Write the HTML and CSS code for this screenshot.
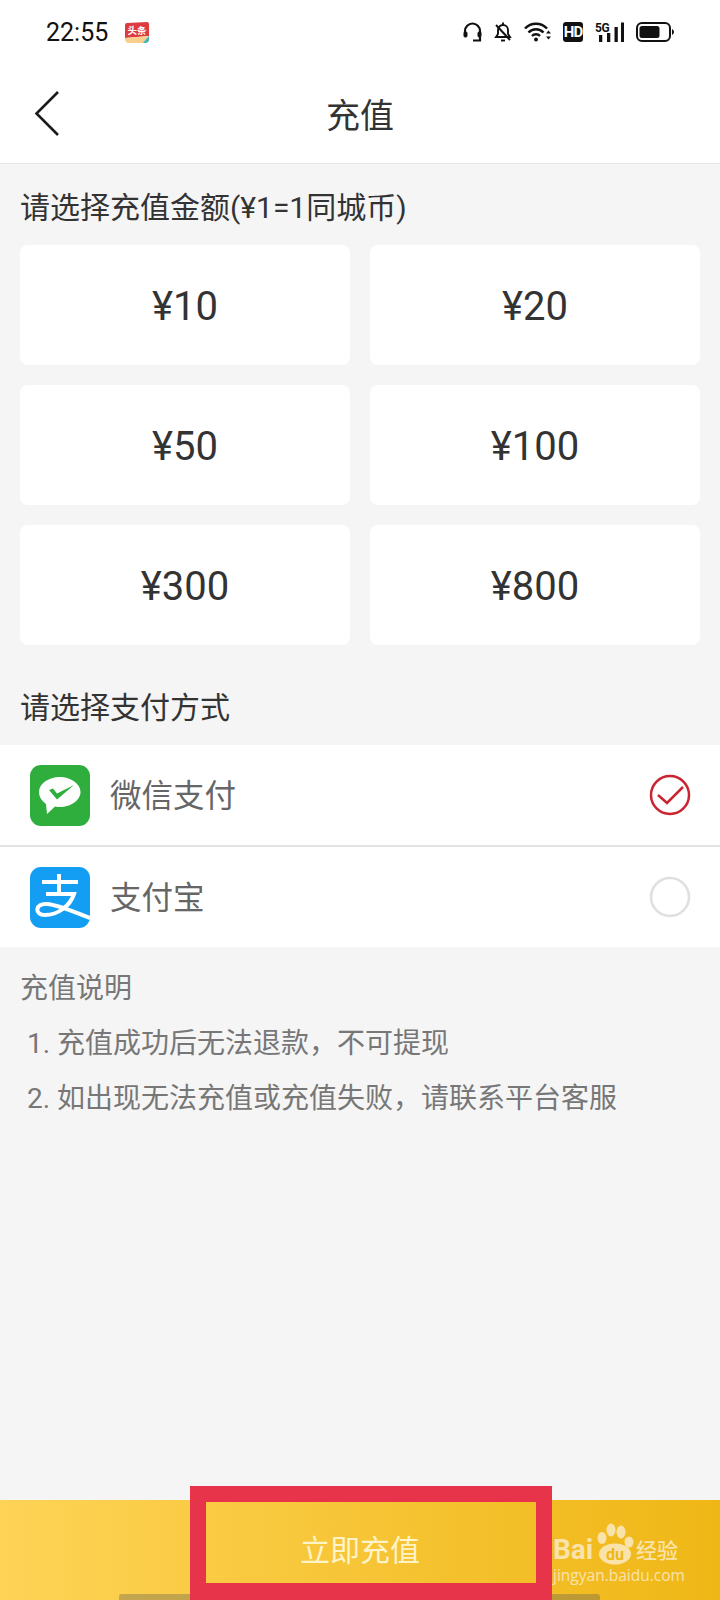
FILE: index.html
```html
<!DOCTYPE html>
<html lang="zh-CN">
<head>
    <meta charset="UTF-8">
    <meta name="viewport" content="width=device-width, initial-scale=1.0">
    <title>充值</title>
    <link rel="stylesheet" href="styles.css">
</head>
<body>
    <div class="page">
        <div class="statusBar">
            <div class="statusLeft">
                <span class="clock">22:55</span>
                <svg class="appIcon" width="24" height="21" viewBox="0 0 24 21">
                    <path d="M0 3 Q0 1 2 1 L22 0 Q24 0 24 2 L24 14 L0 16 Z" fill="#dd3b40"/>
                    <path d="M0 16 L24 14 L24 17 Q24 21 20 21 L4 21 Q0 21 0 17 Z" fill="#f8cf8c"/>
                    <path d="M18 21 L24 14 L24 17 Q24 21 20 21 Z" fill="#3cb4c8"/>
                    <text x="12" y="12" class="appIconText">头条</text>
                </svg>
            </div>
            <div class="statusRight">
                <!-- headset -->
                <svg width="19" height="20" viewBox="0 0 19 20" fill="none" stroke="#111" stroke-width="2.200">
                    <path d="M2 12 V9 A7.500 7.500 0 0 1 17 9 V12"/>
                    <rect x="1" y="10" width="3" height="5" rx="1" fill="#111" stroke-width="1"/>
                    <rect x="15" y="10" width="3" height="5" rx="1" fill="#111" stroke-width="1"/>
                    <path d="M17 15 V18.500 H10"/>
                </svg>
                <!-- muted bell -->
                <svg width="18" height="20" viewBox="0 0 18 20" fill="none" stroke="#111" stroke-width="1.900">
                    <path d="M2 15 L4 12 V8 A5 5 0 0 1 14 8 V12 L16 15 Z"/>
                    <path d="M7 18.500 H11"/>
                    <path d="M9 0.500 V3"/>
                    <path d="M2 3 L16 18"/>
                </svg>
                <!-- wifi -->
                <svg width="27" height="20" viewBox="0 0 27 20" fill="none" stroke="#111" stroke-width="2.500">
                    <path d="M1 6.500 A15 15 0 0 1 23 6.500"/>
                    <path d="M4.500 10.500 A10.500 10.500 0 0 1 19.500 10.500"/>
                    <path d="M8 14 A5.500 5.500 0 0 1 16 14"/>
                    <circle cx="12" cy="17.500" r="2" fill="#111" stroke="none"/>
                    <path d="M22 11.500 L24.500 8.500 L27 11.500 Z M22 14.500 L24.500 17.500 L27 14.500 Z" fill="#111" stroke="none"/>
                </svg>
                <div class="hdBadge">HD</div>
                <!-- 5G signal -->
                <div class="signal">
                    <span class="fiveG">5G</span>
                    <svg width="29" height="20" viewBox="0 0 29 20" fill="#111">
                        <rect x="4" y="13" width="3.300" height="7"/>
                        <rect x="12" y="11" width="3.300" height="9"/>
                        <rect x="19.500" y="5" width="3.300" height="15"/>
                        <rect x="26" y="0.500" width="3" height="19.500"/>
                    </svg>
                </div>
                <!-- battery -->
                <svg width="38" height="20" viewBox="0 0 38 20">
                    <rect x="1" y="1" width="33" height="18" rx="5" fill="none" stroke="#111" stroke-width="2"/>
                    <rect x="3.500" y="4" width="20" height="12" rx="2.500" fill="#111"/>
                    <path d="M36 7 Q38 8 38 10 Q38 12 36 13 Z" fill="#111"/>
                </svg>
            </div>
        </div>

        <div class="navBar">
            <svg class="backIcon" width="26" height="46" viewBox="0 0 26 46" fill="none" stroke="#1c1c1c" stroke-width="2.600">
                <path d="M24 1 L2.500 22.500 L24 44"/>
            </svg>
            <div class="navTitle">充值</div>
        </div>

        <div class="content">
            <div class="sectionTitle">请选择充值金额(¥1=1同城币)</div>
            <div class="amountGrid">
                <div class="amountCard">¥10</div>
                <div class="amountCard">¥20</div>
                <div class="amountCard">¥50</div>
                <div class="amountCard">¥100</div>
                <div class="amountCard">¥300</div>
                <div class="amountCard">¥800</div>
            </div>

            <div class="sectionTitle payTitle">请选择支付方式</div>
            <div class="payList">
                <div class="payRow">
                    <svg class="payIcon" width="60" height="61" viewBox="0 0 60 61">
                        <rect width="60" height="61" rx="11" fill="#2fae3e"/>
                        <path d="M30 12 C18 12 9 19 9 27 C9 32 12 36 16 39 L17 49 L25 41.500 C27 42 28.500 42 30 42 C41 42 50.500 35 50.500 27 C50.500 19 41 12 30 12 Z" fill="#fff"/>
                        <path d="M19 25 L23 23.500 L27 28.500 L44 20 L27 34.500 Z" fill="#2fae3e"/>
                    </svg>
                    <span class="payName">微信支付</span>
                    <svg class="radio" width="42" height="42" viewBox="0 0 42 42" fill="none" stroke="#ca2430" stroke-width="2.500">
                        <circle cx="21" cy="21" r="19"/>
                        <path d="M9 21 L18 29 L34 13"/>
                    </svg>
                </div>
                <div class="payRow">
                    <svg class="payIcon" width="60" height="61" viewBox="0 0 60 61">
                        <rect width="60" height="61" rx="11" fill="#139ef3"/>
                        <g fill="none" stroke="#fff" stroke-width="4">
                            <path d="M12 15 H48"/>
                            <path d="M29 7 V27"/>
                            <path d="M16 27 H44 C40 39 28 48 15 48 C4 48 5 36 17 37 C30 38 46 46 60 51"/>
                        </g>
                    </svg>
                    <span class="payName">支付宝</span>
                    <svg class="radio" width="42" height="42" viewBox="0 0 42 42" fill="none" stroke="#e0e0e0" stroke-width="2.600">
                        <circle cx="21" cy="21" r="19"/>
                    </svg>
                </div>
            </div>

            <div class="notes">
                <div class="notesHead">充值说明</div>
                <div class="noteLine">1. 充值成功后无法退款，不可提现</div>
                <div class="noteLine">2. 如出现无法充值或充值失败，请联系平台客服</div>
            </div>
        </div>

        <div class="submitBar">立即充值</div>

        <!-- overlays on the screenshot -->
        <div class="homeBar"></div>
        <div class="redBox"></div>
        <div class="watermark">
            <div class="wmTop">
                <span class="wmBai">Bai</span>
                <svg class="wmPaw" width="38" height="42" viewBox="0 0 38 42" fill="#f9e3ab">
                    <ellipse cx="5" cy="15" rx="4.500" ry="6"/>
                    <ellipse cx="14" cy="7" rx="4.500" ry="6.500"/>
                    <ellipse cx="24" cy="9" rx="4.500" ry="6.500"/>
                    <ellipse cx="32" cy="19" rx="4.500" ry="5.500"/>
                    <ellipse cx="18" cy="31" rx="16" ry="10.500"/>
                    <text x="18" y="37" class="wmDu">du</text>
                </svg>
                <span class="wmCn">经验</span>
            </div>
            <div class="wmUrl">jingyan.baidu.com</div>
        </div>
    </div>
</body>
</html>
```

FILE: styles.css
```css
* {
    box-sizing: border-box;
}

body {
    margin: 0;
    font-family: "Roboto", "Noto Sans CJK SC", sans-serif;
}

.page {
    position: relative;
    width: 720px;
    height: 1600px;
    overflow: hidden;
    display: flex;
    flex-direction: column;
    background-color: #f5f5f5;
}

.statusBar {
    height: 64px;
    flex: none;
    padding: 0 46px;
    display: flex;
    justify-content: space-between;
    align-items: center;
    background-color: #fff;
}

.statusLeft {
    display: flex;
    align-items: center;
    gap: 17px;
}

.clock {
    font-size: 25px;
    color: #111;
}

.appIconText {
    font-size: 9.500px;
    font-weight: 700;
    fill: #fff;
    text-anchor: middle;
}

.statusRight {
    display: flex;
    align-items: center;
    gap: 12px;
}

.hdBadge {
    width: 20px;
    height: 20px;
    border-radius: 3px;
    background-color: #111;
    color: #fff;
    font-size: 15px;
    font-weight: 700;
    letter-spacing: -1px;
    line-height: 20px;
    text-align: center;
}

.signal {
    position: relative;
    width: 29px;
    height: 20px;
}

.fiveG {
    position: absolute;
    left: 0;
    top: 0;
    font-size: 12px;
    line-height: 12px;
    font-weight: 700;
    letter-spacing: -0.5px;
    color: #111;
}

.navBar {
    height: 100px;
    flex: none;
    padding-left: 34px;
    display: flex;
    align-items: center;
    background-color: #fff;
    border-bottom: 1px solid #e8e8e8;
}

.navTitle {
    margin-left: 266px;
    font-size: 34px;
    color: #333;
}

.content {
    flex: 1;
}

.sectionTitle {
    height: 81px;
    padding: 26px 0 0 20px;
    font-size: 30px;
    line-height: 36px;
    color: #333;
}

.amountGrid {
    display: grid;
    grid-template-columns: 330px 330px;
    grid-auto-rows: 120px;
    gap: 20px;
    padding-left: 20px;
}

.amountCard {
    display: flex;
    align-items: center;
    justify-content: center;
    padding-top: 2px;
    border-radius: 8px;
    background-color: #fff;
    font-size: 40px;
    color: #333;
}

.payTitle {
    height: 100px;
    padding-top: 45px;
}

.payList {
    background-color: #fff;
}

.payRow {
    height: 100px;
    padding: 0 29px 0 30px;
    display: flex;
    align-items: center;
}

.payRow + .payRow {
    height: 102px;
    border-top: 2px solid #e2e2e2;
}

.payName {
    margin-left: 20px;
    padding-bottom: 4px;
    flex: 1;
    font-size: 31.500px;
    color: #666;
}

.notes {
    padding: 22px 0 0 20px;
    font-size: 28px;
    color: #777;
}

.notesHead {
    line-height: 40px;
}

.noteLine {
    margin-top: 15px;
    padding-left: 7px;
    line-height: 40px;
}

.submitBar {
    height: 100px;
    flex: none;
    padding-bottom: 4px;
    display: flex;
    align-items: center;
    justify-content: center;
    background: linear-gradient(90deg, #fed356, #efb716);
    font-size: 30px;
    color: #fff3c8;
}

.homeBar {
    position: absolute;
    left: 119px;
    bottom: 0;
    width: 481px;
    height: 6px;
    border-radius: 3px 3px 0 0;
    background-color: rgba(90, 90, 90, 0.35);
}

.redBox {
    position: absolute;
    left: 190px;
    top: 1486px;
    width: 362px;
    height: 114px;
    border: 16px solid #e8344b;
    border-bottom-width: 17px;
}

.watermark {
    position: absolute;
    left: 553px;
    top: 1523px;
    color: #f9e3ab;
}

.wmTop {
    display: flex;
    align-items: flex-end;
    height: 42px;
}

.wmBai {
    width: 44px;
    font-size: 28px;
    font-weight: 700;
    line-height: 30px;
}

.wmDu {
    font-size: 16px;
    font-weight: 700;
    fill: #efb716;
    text-anchor: middle;
}

.wmCn {
    margin-left: 1px;
    font-size: 21px;
    font-weight: 500;
    line-height: 28px;
}

.wmUrl {
    font-size: 15.500px;
    line-height: 20px;
    font-family: "Open Sans", sans-serif;
}
```
